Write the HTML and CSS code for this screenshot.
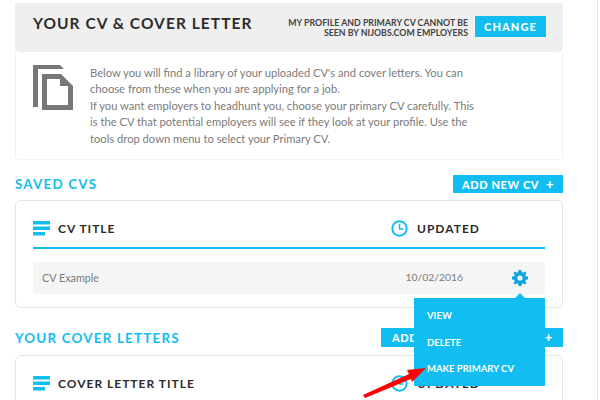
FILE: index.html
```html
<!DOCTYPE html>
<html lang="en">
<head>
  <meta charset="UTF-8">
  <title>Your CV &amp; Cover Letter</title>
  <link rel="stylesheet" href="styles.css">
</head>
<body>
  <div class="page">
    <div class="head-panel">
      <h1>YOUR CV &amp; COVER LETTER</h1>
      <p class="head-note">MY PROFILE AND PRIMARY CV CANNOT BE<br>SEEN BY NIJOBS.COM EMPLOYERS</p>
      <a class="btn btn-change">CHANGE</a>
    </div>
    <div class="intro-panel">
      <svg class="doc-icon" width="41" height="46" viewBox="0 0 41 46">
        <path d="M0 0H27L31 4H5V42H0Z" fill="#777"/>
        <path fill-rule="evenodd" d="M9 9H28L40 21V45H9ZM14 14V40H35V21H27V14Z" fill="#777"/>
      </svg>
      <p>Below you will find a library of your uploaded CV's and cover letters. You can<br>choose from these when you are applying for a job.<br>If you want employers to headhunt you, choose your primary CV carefully. This<br>is the CV that potential employers will see if they look at your profile. Use the<br>tools drop down menu to select your Primary CV.</p>
    </div>

    <div class="section-head">
      <h2>SAVED CVS</h2>
      <a class="btn btn-add">ADD NEW CV <span class="plus">+</span></a>
    </div>
    <div class="card">
      <div class="table-head">
        <div class="col-title">
          <svg class="list-icon" width="17" height="15" viewBox="0 0 17 15"><path d="M0 0H17V3.500H0ZM0 5.500H17V9H0ZM0 11H12V14.500H0Z" fill="#12bdf2"/></svg>
          CV TITLE
        </div>
        <div class="col-updated">
          <svg class="clock-icon" width="17" height="17" viewBox="0 0 17 17"><circle cx="8.500" cy="8.500" r="7.200" fill="none" stroke="#12bdf2" stroke-width="2"/><path d="M8.500 4V9H12.500" fill="none" stroke="#12bdf2" stroke-width="1.500"/></svg>
          UPDATED
        </div>
      </div>
      <div class="table-row">
        <span class="row-title">CV Example</span>
        <span class="row-date">10/02/2016</span>
        <svg class="gear-icon" width="16" height="16" viewBox="0 0 16 16"><path fill-rule="evenodd" d="M6.600 0H9.400L9.800 2.100L11.200 2.700L13 1.500L14.500 3L13.300 4.800L13.900 6.200L16 6.600V9.400L13.900 9.800L13.300 11.200L14.500 13L13 14.500L11.200 13.300L9.800 13.900L9.400 16H6.600L6.200 13.900L4.800 13.300L3 14.500L1.500 13L2.700 11.200L2.100 9.800L0 9.400V6.600L2.100 6.200L2.700 4.800L1.500 3L3 1.500L4.800 2.700L6.200 2.100ZM8 5.400A2.600 2.600 0 1 0 8 10.600A2.600 2.600 0 1 0 8 5.400Z" fill="#12a3dc"/></svg>
      </div>
    </div>

    <div class="section-head section-cover">
      <h2>YOUR COVER LETTERS</h2>
      <a class="btn btn-add btn-add-cover"><span>ADD NEW COVER LETTER</span> <span class="plus">+</span></a>
    </div>
    <div class="card">
      <div class="table-head">
        <div class="col-title">
          <svg class="list-icon" width="17" height="15" viewBox="0 0 17 15"><path d="M0 0H17V3.500H0ZM0 5.500H17V9H0ZM0 11H12V14.500H0Z" fill="#12bdf2"/></svg>
          COVER LETTER TITLE
        </div>
        <div class="col-updated">
          <svg class="clock-icon" width="17" height="17" viewBox="0 0 17 17"><circle cx="8.500" cy="8.500" r="7.200" fill="none" stroke="#12bdf2" stroke-width="2"/><path d="M8.500 4V9H12.500" fill="none" stroke="#12bdf2" stroke-width="1.500"/></svg>
          UPDATED
        </div>
      </div>
    </div>

    <div class="tools-menu">
      <a>VIEW</a>
      <a>DELETE</a>
      <a>MAKE PRIMARY CV</a>
    </div>
    <svg class="red-arrow" width="66" height="34" viewBox="0 0 66 34">
      <path d="M1 29L3 32L49 13L50 16L64 2L45 4L47 8Z" fill="#f00"/>
    </svg>
  </div>
</body>
</html>
```

FILE: styles.css
```css
html, body {
  height: 100%;
}
body {
  margin: 0;
  background-color: #fff;
  font-family: Lato, "Liberation Sans", sans-serif;
  color: #7b7b7b;
  overflow: hidden;
}
h1, h2, p {
  margin: 0;
}
.page {
  position: relative;
  box-sizing: border-box;
  width: 598px;
  height: 400px;
  padding: 3px 34px 0 15px;
  border-right: 1px solid #e6e6e6;
  overflow: hidden;
}
.head-panel {
  display: flex;
  align-items: flex-start;
  box-sizing: border-box;
  height: 49px;
  padding: 13px 17px 0 18px;
  background-color: #efefef;
  border-radius: 0 0 5px 5px;
}
.head-panel h1 {
  flex: 1;
  margin-top: -3px;
  font-size: 15.5px;
  font-weight: 700;
  line-height: 21px;
  letter-spacing: 1.05px;
  color: #2c2c2c;
}
.head-note {
  margin: 2px 7px 0 0;
  font-size: 8.8px;
  font-weight: 700;
  line-height: 9.500px;
  text-align: right;
  color: #444;
}
.btn {
  display: block;
  box-sizing: border-box;
  background-color: #12bdf2;
  color: #fff;
  font-weight: 900;
  white-space: nowrap;
}
.btn-change {
  width: 71px;
  height: 21px;
  font-size: 11px;
  line-height: 21px;
  letter-spacing: 1.1px;
  text-align: center;
}
.intro-panel {
  display: flex;
  box-sizing: border-box;
  height: 108px;
  padding: 13px 18px 0 17px;
  border: 1px solid #f1f1f1;
  border-top: none;
  border-radius: 0 0 5px 5px;
}
.doc-icon {
  flex: none;
  margin-right: 16px;
}
.intro-panel p {
  font-size: 11.2px;
  line-height: 16.4px;
  white-space: nowrap;
}
.section-head {
  display: flex;
  align-items: center;
  justify-content: space-between;
  margin-top: 15px;
  height: 18px;
}
.section-head h2 {
  font-size: 13.4px;
  font-weight: 700;
  letter-spacing: 1.2px;
  color: #12bdf2;
}
.btn-add {
  width: 110px;
  height: 18px;
  font-size: 11px;
  line-height: 18px;
  letter-spacing: 0.6px;
  text-align: center;
}
.plus {
  margin-left: 4px;
  font-size: 13px;
}
.section-cover {
  margin-top: 20px;
  height: 20px;
}
.btn-add-cover {
  display: flex;
  justify-content: space-between;
  align-self: flex-start;
  width: 182px;
  height: 19px;
  line-height: 19px;
  padding: 0 10px 0 11px;
}
.card {
  box-sizing: border-box;
  height: 108px;
  margin-top: 7px;
  padding: 0 17px;
  border: 1px solid #e4e4e4;
  border-radius: 6px;
}
.table-head {
  display: flex;
  align-items: center;
  box-sizing: border-box;
  height: 48px;
  padding-top: 9px;
  border-bottom: 2px solid #12bdf2;
  font-size: 12px;
  font-weight: 700;
  letter-spacing: 1px;
  color: #2c2c2c;
}
.col-title {
  display: flex;
  align-items: center;
  flex: 1;
}
.col-updated {
  display: flex;
  align-items: center;
  width: 154px;
}
.list-icon {
  margin-right: 8px;
}
.clock-icon {
  margin-right: 9px;
}
.table-row {
  display: flex;
  align-items: center;
  height: 32px;
  margin-top: 13px;
  padding: 0 17px 2px 9px;
  box-sizing: border-box;
  background-color: #f5f5f5;
  font-size: 10.8px;
}
.row-title {
  flex: 1;
}
.row-date {
  margin-right: 49px;
  font-size: 10.4px;
  color: #7b7b7b;
}
.gear-icon {
  margin-top: 2px;
}
.tools-menu {
  position: absolute;
  left: 414px;
  top: 298px;
  display: flex;
  flex-direction: column;
  gap: 13.5px;
  box-sizing: border-box;
  width: 131px;
  height: 88px;
  padding: 11px 13px 0;
  background-color: #12bdf2;
  color: #fff;
  font-size: 9.5px;
  font-weight: 700;
  line-height: 13px;
}
.tools-menu::before {
  content: "";
  position: absolute;
  left: 101px;
  top: -5px;
  border-left: 5px solid transparent;
  border-right: 5px solid transparent;
  border-bottom: 5px solid #12bdf2;
}
.red-arrow {
  position: absolute;
  left: 362px;
  top: 366px;
}
```
